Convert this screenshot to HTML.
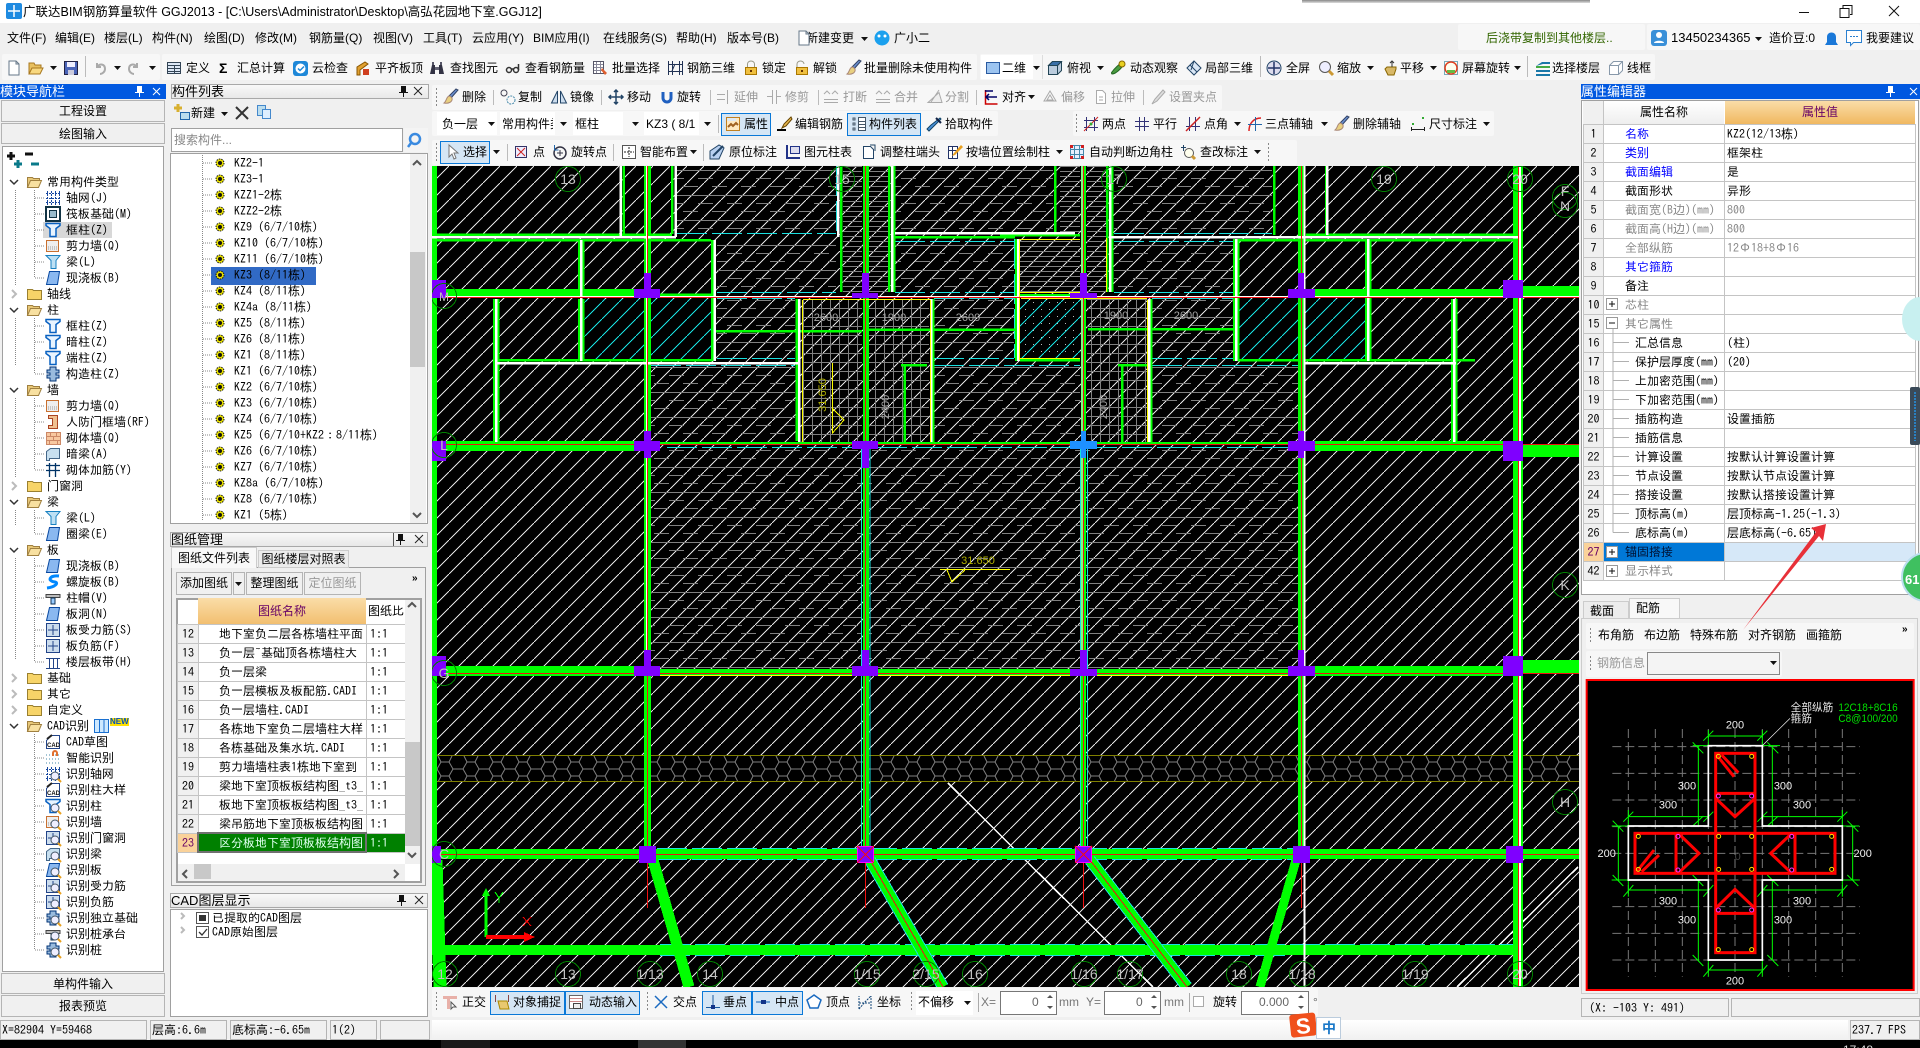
<!DOCTYPE html>
<html><head><meta charset="utf-8"><title>GGJ2013</title>
<style>
html,body{margin:0;width:1920px;height:1048px;overflow:hidden;background:#f0f0f0}
body{position:relative;font:12px/14px "Liberation Sans","WenQuanYi Zen Hei","Noto Sans CJK SC",sans-serif;color:#000}
a{position:absolute;white-space:pre}
div.b,svg.l{position:absolute}
.m1{top:31px}.t1{top:61px}.t2{top:90px}.t3{top:117px}.t4{top:145px}.t5{top:995px}
.g{color:#999}
.tb{background:#f7f7f7;border-radius:2px}
.on{background:#d5e6f5;border:1px solid #0a78d7;box-sizing:border-box}
.m{font-family:"IPAGothic","WenQuanYi Zen Hei","Noto Sans CJK SC",sans-serif}
.w{background:#fff}
.bd{border:1px solid #a0a0a0;box-sizing:border-box}
.btn{background:#f0f0f0;border:1px solid #b4b4b4;box-sizing:border-box;text-align:center;line-height:20px}
.hd{background:linear-gradient(#f8f8f8,#e8e8e8);border:1px solid #a8a8a8;box-sizing:border-box;font-size:13px;line-height:14px;white-space:nowrap;overflow:hidden}
.blue{background:#0058e0;color:#fff;font-size:13px;line-height:15px;white-space:nowrap}
.tree div{height:16px;line-height:16px;white-space:pre}
.tree .p{padding-left:47px}.tree .c{padding-left:66px}
table{position:absolute;border-collapse:collapse;table-layout:fixed;font-size:12px}
td{border:1px solid #c4c4c4;height:18px;padding:0;line-height:14px;white-space:nowrap;overflow:hidden}
td:first-child{background:#f0f0f0;text-align:center}
.bl{color:#00f}.gy{color:#888}
.pt td:nth-child(2){padding-left:21px}.pt td:nth-child(3){padding-left:2px}
.ch td:nth-child(2){padding-left:31px!important}
.dt td:nth-child(2){padding-left:20px}.dt td:nth-child(3){padding-left:3px;background:#fff}
</style></head>
<body>
<svg width="0" height="0" style="position:absolute"><defs>
<path id="dn" d="M0 0h7L3.500 4z" fill="#111"/>
<g id="new"><path d="M3 1h7l3 3v11H3z" fill="#fff" stroke="#678"/><path d="M10 1v3h3" fill="none" stroke="#678"/></g>
<g id="open"><path d="M1 14V3h5l1 2h6v3" fill="#e8c060" stroke="#a87820"/><path d="M1 14l3-6h11l-3 6z" fill="#f8d880" stroke="#a87820"/></g>
<g id="save"><path d="M1.500 1.500h13v13h-13z" fill="#4a64b8" stroke="#224"/><path d="M4 2h8v5H4z" fill="#eef"/><path d="M5 10h6v5H5z" fill="#ccd"/></g>
<path id="undo" d="M5 3v4h4M5 7c3-4 8-3 8 2 0 3-3 5-5 5" fill="none" stroke="#aaa" stroke-width="2"/>
<path id="redo" d="M11 3v4H7M11 7C8 3 3 4 3 9c0 3 3 5 5 5" fill="none" stroke="#aaa" stroke-width="2"/>
<g id="def"><path d="M1.500 2.500h13v11h-13z" fill="#dde8f6" stroke="#345"/><path d="M2 5.500h12M2 8.500h12M2 11.500h12M8.500 6v8" stroke="#345"/></g>
<g id="cloud"><rect x="1" y="1" width="15" height="15" rx="3" fill="#1e88d8"/><circle cx="8.500" cy="8.500" r="5" fill="#fff"/><path d="M6 8.500l2 2 4-4" stroke="#1e88d8" fill="none" stroke-width="1.500"/></g>
<g id="plate"><path d="M2 15V7l8-5 3 2-8 6v5z" fill="#e0a030" stroke="#850"/><path d="M8 9h6v6H8z" fill="#d04020"/></g>
<g id="find"><path d="M1 14l2-9h3v9zM10 14V5h3l2 9z" fill="#334"/><path d="M6 7h4v3H6z" fill="#667"/><path d="M3 2h2v3H3zM11 2h2v3h-2z" fill="#556"/></g>
<g id="gls" fill="none" stroke="#333" stroke-width="1.500"><circle cx="4" cy="10" r="2.500"/><circle cx="11" cy="10" r="2.500"/><path d="M6.500 9h2M13.500 10V4"/></g>
<g id="bsel"><path d="M1.500 1.500h10v12h-10z" fill="#fff" stroke="#556"/><path d="M2 4.500h9M2 7.500h9M2 10.500h9M4.500 2v11M8.500 2v11" stroke="#889"/><path d="M10 8l5 5-2 2-4-5z" fill="#e06030"/></g>
<path id="r3d" d="M1.500 1v14M5.500 1v14M12.500 1v14M15.500 1v14M1 4.500h15M1 11.500h15M8 4l-3 7" stroke="#235" fill="none"/>
<g id="lock"><path d="M4.500 7V4a3.500 3 0 0 1 7 0v3" fill="none" stroke="#998"/><rect x="2.500" y="7.500" width="11" height="7" fill="#f0c040" stroke="#a70"/><path d="M8 10v2" stroke="#630" stroke-width="2"/></g>
<g id="ulk"><path d="M3 7V4a3.500 3 0 0 1 7 0" fill="none" stroke="#998"/><rect x="2.500" y="7.500" width="11" height="7" fill="#f0c040" stroke="#a70"/><path d="M8 10v2" stroke="#630" stroke-width="2"/></g>
<g id="brush"><path d="M15 1L8 9 6 7l7-7z" fill="#6a8fd0" stroke="#346"/><path d="M7 7c-4 0-3 5-6 7 4 1 9-1 8-5z" fill="#e8d080" stroke="#a87"/></g>
<rect id="sq" x="1.500" y="2.500" width="13" height="11" fill="#9cc4f0" stroke="#2a5aa0"/>
<g id="cube"><path d="M1.500 5.500l4-4h9v9l-4 4h-9z" fill="#bcd" stroke="#245"/><path d="M1.500 5.500l4-4h9l-4 4z" fill="#3a70a8" stroke="#245"/><path d="M10.500 5.500v9M10.500 5.500l4-4" fill="none" stroke="#245"/></g>
<g id="orb"><path d="M13 2c3 3-7 12-11 12 0 0-1-1 0-2 2-3 7-8 11-10z" fill="#4a9a40" stroke="#262"/><circle cx="12" cy="4" r="3" fill="#e8d020" stroke="#860"/></g>
<g id="loc"><path d="M1 8l7-7 7 7-7 7z" fill="#dbe8f6" stroke="#246"/><path d="M4 5l7 7M8 1L5 10" stroke="#246"/></g>
<g id="full"><circle cx="8" cy="8" r="7" fill="#dde" stroke="#246"/><path d="M8 2v12M2 8h12" stroke="#236" stroke-width="1.500"/></g>
<g id="zm"><circle cx="7" cy="7" r="5.500" fill="#eef" stroke="#555"/><path d="M11 11l4 4" stroke="#c93" stroke-width="3"/></g>
<g id="hand"><path d="M3 9l3 6h6l2-6V7H5z" fill="#d8b868" stroke="#860"/><path d="M10 7V1M8 3l2-2 2 2" stroke="#333" fill="none"/></g>
<g id="rotz"><rect x="1.500" y="1.500" width="13" height="13" fill="#ffe" stroke="#7ab"/><circle cx="8" cy="8" r="6" fill="none" stroke="#e04020" stroke-width="1.500"/><path d="M4 10h8v3H4z" fill="#6b4"/></g>
<g id="flr"><path d="M1 6l6-4h8v2H8z" fill="#1a78a8"/><path d="M1 6h14v2H1z" fill="#4a4"/><path d="M1 10h14v2H1zM1 14h14v2H1z" fill="#1a78a8"/></g>
<path id="wire" d="M1.500 5.500l4-4h9v9l-4 4h-9zM1.500 5.500h9v9M10.500 5.500l4-4" fill="#fff" stroke="#89a"/>
<g id="copy" fill="none"><circle cx="4" cy="4" r="3" stroke="#445"/><circle cx="11" cy="11" r="4" stroke="#48a" stroke-dasharray="2 1"/></g>
<path id="mir" d="M6.500 2v12h-6zM9.500 2v12h6z" fill="#cde" stroke="#246"/>
<path id="mov" d="M8 1v14M1 8h14M6 3l2-2 2 2M6 13l2 2 2-2M3 6L1 8l2 2M13 6l2 2-2 2" fill="none" stroke="#246" stroke-width="1.500"/>
<path id="rot" d="M4 3v6a4 4 0 0 0 8 0V3" fill="none" stroke="#2060c0" stroke-width="3"/>
<path id="ext" d="M1 5.500h8M1 10.500h8M11.500 1v14" fill="none" stroke="#aaa"/>
<path id="trm" d="M6.500 1v14M10.500 1v14M1 7.500h5M11 7.500h4" stroke="#aaa"/>
<path id="brk" d="M1 5l3-3 3 3M9 5l3-3 3 3M1 10.500h14M1 13.500h14" stroke="#aaa" fill="none"/>
<path id="spl" d="M1 13.500h14l-3-10zM12 1L4 13" fill="#eee" stroke="#aaa"/>
<g id="alg"><path d="M2.500 1v14h12" stroke="#c00" fill="none" stroke-width="1.500"/><path d="M2 2h8M6 5L3 8l3 3M14 8H4" stroke="#006" fill="none" stroke-width="1.500"/></g>
<path id="off" d="M8 2l6 10H2zM8 6l3 5H5z" stroke="#aaa" fill="none"/>
<path id="str" d="M3.500 1.500h6l3 3v10h-9zM6 8h4M6 11h4" fill="#fff" stroke="#aaa"/>
<path id="ptd" d="M13 1L5 10l-3 5 5-3 8-9z" fill="#ddd" stroke="#aaa"/>
<g id="atr"><rect x="1.500" y="1.500" width="13" height="13" fill="#ffe8c0" stroke="#c08020"/><path d="M2 2h9v3H2z" fill="#e0e8f0"/><path d="M3 11l3-3 2 2 3-3 2 2" fill="none" stroke="#a06020" stroke-width="2"/></g>
<g id="edt"><path d="M1 14h9" stroke="#000" stroke-width="2"/><path d="M15 1L8 8l-2 4 4-2 6-7z" fill="#e8b850" stroke="#640"/></g>
<g id="lst"><path d="M2 2h2v2H2zM2 7h2v2H2zM2 12h2v2H2z" fill="none" stroke="#456"/><rect x="7.500" y="1.500" width="7" height="13" fill="#fff" stroke="#456"/><path d="M8 5.500h6M8 8.500h6M8 11.500h6" stroke="#456"/></g>
<g id="pck"><path d="M13 2l1 1-8 8-4 4-2-2 4-4z" fill="#4a90d8" stroke="#146"/><path d="M9 2l5 5" stroke="#124" stroke-width="2"/></g>
<g id="two"><path d="M3.500 1v14M11.500 1v14M1 4.500h14M1 11.500h14" stroke="#337" fill="none"/><path d="M1 15L15 1" stroke="#c22"/><circle cx="8" cy="8" r="1.500" fill="#3a3"/></g>
<path id="par" d="M1 5.500h14M1 10.500h14M5.500 1v14M10.500 1v14" stroke="#337"/>
<g id="ang"><path d="M4.500 1v14M10.500 1v14M1 10.500h14" stroke="#337"/><path d="M1 15L15 1" stroke="#c22" stroke-width="1.500"/></g>
<g id="arc"><path d="M2 15C2 7 7 2 14 2" stroke="#d22" fill="none" stroke-width="1.500"/><path d="M1 8.500h14M8.500 1v14" stroke="#26a"/></g>
<g id="dim"><path d="M1.500 15v-4M14.500 15v-4M1 13.500h14" stroke="#222"/><path d="M2 7h2v2H2zM12 1h2v2h-2z" fill="#3a3"/></g>
<path id="cur" d="M4 1v12l3-3 2 5 2-1-2-5h4z" fill="#fff" stroke="#777"/>
<g id="pnt"><rect x="1.500" y="2.500" width="11" height="11" fill="#eef" stroke="#336"/><path d="M3 4l8 8M11 4l-8 8" stroke="#c22"/></g>
<g id="rp" fill="none"><circle cx="8" cy="9" r="6" stroke="#334" stroke-width="1.500"/><path d="M8 6v6M5 9h6" stroke="#334"/><path d="M2.500 1v5h4" stroke="#26a"/></g>
<g id="sma"><rect x="1.500" y="1.500" width="13" height="13" fill="#fff" stroke="#555"/><path d="M8 3v10M3 8h10" stroke="#222" stroke-dasharray="2 1"/></g>
<g id="org"><path d="M1 15V7l9-6 5 3-5 11z" fill="#b8d0f0" stroke="#246"/><path d="M4 12L14 2" stroke="#246" stroke-width="2"/></g>
<g id="tbl"><path d="M2 1v13h13" fill="none" stroke="#238" stroke-width="2"/><rect x="5.500" y="2.500" width="9" height="7" fill="#dde" stroke="#238"/></g>
<g id="adj"><path d="M3.500 2.500h7l3 3v9h-10z" fill="#fff" stroke="#246"/><path d="M10 1h5v6" fill="none" stroke="#246"/></g>
<g id="wl2"><rect x="1.500" y="2.500" width="9" height="12" fill="#fff" stroke="#236"/><path d="M2 6.500h8M5.500 3v11" stroke="#236"/><path d="M14 1L7 9l-2 3 3-1 8-8z" fill="#e8a020"/></g>
<g id="aut"><rect x="1.500" y="1.500" width="13" height="13" fill="#e8f0ff" stroke="#48a"/><path d="M5.500 2v12M10.500 2v12M2 5.500h12M2 10.500h12" stroke="#48a"/><path d="M1 1h3v3H1zM12 1h3v3h-3zM1 12h3v3H1zM12 12h3v3h-3z" fill="#d02020"/></g>
<g id="chk"><path d="M3.500 1v6M1 3.500h5" stroke="#246"/><circle cx="9" cy="9" r="4.500" fill="#ffe" stroke="#555"/><path d="M12 12l3 3" stroke="#c93" stroke-width="3"/></g>
<g id="ort"><path d="M1 2h14v3H8v10H5V5H1z" fill="#e8b0a8"/><path d="M9 8v7l2-2h3z" fill="#fff" stroke="#555"/></g>
<g id="snp"><path d="M1.500 1v7M14.500 1v7" stroke="#844"/><path d="M4 7h9l2 8H6z" fill="#e8c870" stroke="#a80"/></g>
<g id="dyn"><rect x="1.500" y="1.500" width="13" height="13" fill="#fff" stroke="#666"/><path d="M2 4.500h12M2 7.500h12" stroke="#c88"/><rect x="5.500" y="9.500" width="7" height="5" fill="#eee" stroke="#444"/></g>
<path id="crs" d="M2 2l12 12M14 2L2 14" stroke="#1a6ac0" stroke-width="1.500"/>
<g id="prp"><path d="M1 13.500h14M8 1v12" stroke="#1a5aa0"/><rect x="6" y="11" width="4" height="4" fill="#138"/></g>
<g id="mdp"><path d="M1 8h14" stroke="#4a88c8" stroke-width="1.500"/><rect x="6" y="6" width="5" height="4" fill="#138"/></g>
<path id="apx" d="M8 1l7 5-3 8H4L1 6z" fill="#fff" stroke="#1a6ac0" stroke-width="1.500"/>
<path id="crd" d="M2 15l6-7 6-6M2 15V2M14 15V2M2 9h12" stroke="#147" stroke-dasharray="2 1" fill="none"/>
<path id="fc" d="M1.500 13.500v-10h5l1 1h8v9z" fill="#f7d468" stroke="#9a8030"/>
<g id="fo"><path d="M1.500 13.500v-10h5l1 1h6v2" fill="#e8c878" stroke="#a08040"/><path d="M1.500 13.500l3-7h11l-3 7z" fill="#f8e0a0" stroke="#a08040"/></g>
<path id="col" d="M1 1.500h14v2l-4 3v8H5v-8l-4-3z" fill="#e8f4ff" stroke="#0860c0" stroke-width="1.500"/>
<g id="wal"><rect x="1.500" y="2.500" width="12" height="11" fill="#eee" stroke="#c87030"/><path d="M3 11h9M3 9h9" stroke="#999" stroke-dasharray="1 1"/></g>
<path id="bem" d="M1 1.500h14l-4 5v8H6v-8z" fill="#bde0f4" stroke="#1880c0"/>
<path id="slb" d="M4.500 1.500h10l-2 13H1.500z" fill="#8ab8f0" stroke="#0848a0"/>
<path id="axi" d="M2.500 1v14M6.500 1v14M10.500 1v14M14.500 1v14M1 3.500h15M1 8.500h15M1 12.500h15" stroke="#1848a0" stroke-dasharray="2 1"/>
<g id="raf"><rect x="1" y="1" width="14" height="14" fill="none" stroke="#134" stroke-width="2"/><rect x="4.500" y="4.500" width="7" height="7" fill="#9bc" stroke="#134"/></g>
<path id="gzz" d="M5 1h6v3h3v3h-3v2h3v3h-3v3H5v-3H2V9h3V7H2V4h3z" fill="#9bd" stroke="#037"/>
<path id="dor" d="M3.500 1.500h9v13h-9v-3h4v-7h-4z" fill="#f0c090" stroke="#a42"/>
<g id="mas"><rect x="1.500" y="2.500" width="14" height="12" fill="#f8c8a0" stroke="#c86"/><path d="M2 6.500h13M2 10.500h13M5.500 3v3M11.500 3v3M8.500 7v3M4.500 11v3M12.500 11v3" stroke="#c86"/></g>
<path id="hid" d="M1.500 5.500l4-3h9v10h-10v2h-3z" fill="#c8e0f0" stroke="#468"/>
<path id="mrf" d="M1 3.500h14M4.500 1v14M10.500 1v14M1 8.500h14" stroke="#036" stroke-width="1.300"/>
<path id="spi" d="M14 2C4 1 2 7 10 8c4 1 0 5-8 6" fill="none" stroke="#08f" stroke-width="3"/>
<g id="cap"><path d="M1 4.500h14v3H1z" fill="#bbb" stroke="#444"/><path d="M6 8h4v6H6z" fill="#9cf" stroke="#135"/></g>
<g id="rb"><rect x="1.500" y="1.500" width="13" height="13" fill="#cde" stroke="#248"/><path d="M8 3v10M3 8h10" stroke="#248"/></g>
<path id="bnd" d="M1 4.500h14M1 14.500h14M4.500 5v9M8.500 5v9M12.500 5v9" stroke="#248"/>
<g id="cad"><path d="M1.500 6.500l5-5h8v13h-13z" fill="#fff" stroke="#248"/><path d="M2 5L7 1" stroke="#222" stroke-width="2"/><text x="2" y="13" font-size="6" font-weight="bold" fill="#111" font-family="Liberation Sans">CAD</text></g>
<g id="ai"><path d="M1 5h14M1 9h14M1 13h14" stroke="#48a" stroke-dasharray="1 2"/><path d="M7 6V3a3 3 0 0 1 6 0v3h-2V3a1 1 0 0 0-2 0v3z" fill="#e07030"/></g>
<g id="mg"><circle cx="10" cy="10" r="4" fill="#eef" stroke="#456"/><path d="M13 13l3 3" stroke="#e8a020" stroke-width="2"/></g>
<path id="pin" d="M3 1h5v6h2v1H6v4H5V8H1V7h2z" fill="#111"/>
<path id="xx" d="M0 0l8 8M8 0L0 8" stroke="#222" fill="none"/>
<g id="gz"><circle cx="6" cy="6" r="4" fill="#e8e000" stroke="#111" stroke-dasharray="1.500 1"/><circle cx="6" cy="6" r="2" fill="#111"/></g>
</defs></svg>

<div class="b w" style="left:0;top:0;width:1920px;height:23px"></div>
<div class="b" style="left:1302px;top:0;width:288px;height:3px;background:linear-gradient(#888,#ddd)"></div>
<svg class="l" style="left:6px;top:3px" width="16" height="16"><rect width="16" height="16" rx="2" fill="#1e8ae0"/><path d="M8 2v12M2 8h12" stroke="#fff" stroke-width="1.500" fill="none"/></svg>
<a style="left:23px;top:5px;font-size:12.500px;color:#000">广联达BIM钢筋算量软件 GGJ2013 - [C:\Users\Administrator\Desktop\高弘花园地下室.GGJ12]</a>
<svg class="l" style="left:1790px;top:0" width="130" height="23"><path d="M9 12.500h10M50 8.500h9v9h-9zM53 8V5.500h9v9h-2M99 6l10 10M109 6L99 16" stroke="#111" fill="none"/></svg>

<a class="m1" style="left:7px">文件(F)</a><a class="m1" style="left:55px">编辑(E)</a><a class="m1" style="left:104px">楼层(L)</a><a class="m1" style="left:152px">构件(N)</a><a class="m1" style="left:204px">绘图(D)</a><a class="m1" style="left:255px">修改(M)</a><a class="m1" style="left:309px">钢筋量(Q)</a><a class="m1" style="left:373px">视图(V)</a><a class="m1" style="left:423px">工具(T)</a><a class="m1" style="left:472px">云应用(Y)</a><a class="m1" style="left:533px">BIM应用(I)</a><a class="m1" style="left:603px">在线服务(S)</a><a class="m1" style="left:676px">帮助(H)</a><a class="m1" style="left:727px">版本号(B)</a><a class="m1" style="left:806px">新建变更</a><a class="m1" style="left:894px">广小二</a>
<div class="b tb" style="left:1458px;top:24px;width:187px;height:26px"></div><div class="b tb" style="left:1647px;top:24px;width:273px;height:26px"></div>
<a class="m1" style="left:1486px;color:#336600">后浇带复制到其他楼层..</a><a class="m1" style="left:1671px;font-size:13px">13450234365</a><a class="m1" style="left:1769px">造价豆:0</a><a class="m1" style="left:1866px">我要建议</a>

<div class="b tb" style="left:2px;top:54px;width:158px;height:26px"></div><div class="b tb" style="left:162px;top:54px;width:815px;height:26px"></div><div class="b tb" style="left:980px;top:54px;width:675px;height:26px"></div><div class="b w" style="left:981px;top:55px;width:52px;height:24px"></div><div class="b w" style="left:1042px;top:55px;width:1px;height:24px;background:#ddd"></div>
<a class="t1" style="left:186px">定义</a><a class="t1" style="left:219px;font-weight:bold;font-size:14px">Σ</a><a class="t1" style="left:237px">汇总计算</a><a class="t1" style="left:312px">云检查</a><a class="t1" style="left:375px">平齐板顶</a><a class="t1" style="left:450px">查找图元</a><a class="t1" style="left:525px">查看钢筋量</a><a class="t1" style="left:612px">批量选择</a><a class="t1" style="left:687px">钢筋三维</a><a class="t1" style="left:762px">锁定</a><a class="t1" style="left:813px">解锁</a><a class="t1" style="left:864px">批量删除未使用构件</a><a class="t1" style="left:1002px">二维</a><a class="t1" style="left:1067px">俯视</a><a class="t1" style="left:1130px">动态观察</a><a class="t1" style="left:1205px">局部三维</a><a class="t1" style="left:1286px">全屏</a><a class="t1" style="left:1337px">缩放</a><a class="t1" style="left:1400px">平移</a><a class="t1" style="left:1462px">屏幕旋转</a><a class="t1" style="left:1552px">选择楼层</a><a class="t1" style="left:1627px">线框</a>

<div class="b tb" style="left:432px;top:85px;width:790px;height:25px"></div>
<a class="t2" style="left:462px">删除</a><a class="t2" style="left:518px">复制</a><a class="t2" style="left:570px">镜像</a><a class="t2" style="left:627px">移动</a><a class="t2" style="left:677px">旋转</a><a class="t2 g" style="left:734px">延伸</a><a class="t2 g" style="left:785px">修剪</a><a class="t2 g" style="left:843px">打断</a><a class="t2 g" style="left:894px">合并</a><a class="t2 g" style="left:945px">分割</a><a class="t2" style="left:1002px">对齐</a><a class="t2 g" style="left:1061px">偏移</a><a class="t2 g" style="left:1111px">拉伸</a><a class="t2 g" style="left:1169px">设置夹点</a>

<div class="b tb" style="left:432px;top:111px;width:566px;height:25px"></div><div class="b tb" style="left:1073px;top:111px;width:421px;height:25px"></div>
<div class="b w" style="left:437px;top:112px;width:60px;height:23px"></div><div class="b w" style="left:500px;top:112px;width:55px;height:23px"></div><div class="b w" style="left:573px;top:112px;width:50px;height:23px"></div><div class="b w" style="left:644px;top:112px;width:55px;height:23px"></div>
<div class="b on" style="left:721px;top:113px;width:50px;height:23px"></div><div class="b on" style="left:847px;top:113px;width:74px;height:23px"></div>
<a class="t3" style="left:442px">负一层</a><a class="t3" style="left:502px;width:51px;overflow:hidden">常用构件类</a><a class="t3" style="left:575px">框柱</a><a class="t3" style="left:646px">KZ3 ( 8/1</a><a class="t3" style="left:744px">属性</a><a class="t3" style="left:795px">编辑钢筋</a><a class="t3" style="left:869px">构件列表</a><a class="t3" style="left:945px">拾取构件</a><a class="t3" style="left:1102px">两点</a><a class="t3" style="left:1153px">平行</a><a class="t3" style="left:1204px">点角</a><a class="t3" style="left:1265px">三点辅轴</a><a class="t3" style="left:1353px">删除辅轴</a><a class="t3" style="left:1429px">尺寸标注</a>

<div class="b tb" style="left:432px;top:140px;width:865px;height:25px"></div>
<div class="b on" style="left:440px;top:141px;width:50px;height:23px"></div>
<a class="t4" style="left:463px">选择</a><a class="t4" style="left:533px">点</a><a class="t4" style="left:571px">旋转点</a><a class="t4" style="left:640px">智能布置</a><a class="t4" style="left:729px">原位标注</a><a class="t4" style="left:804px">图元柱表</a><a class="t4" style="left:880px">调整柱端头</a><a class="t4" style="left:966px">按墙位置绘制柱</a><a class="t4" style="left:1089px">自动判断边角柱</a><a class="t4" style="left:1200px">查改标注</a>

<!-- CANVAS -->
<svg class="l" style="left:432px;top:166px" width="1147" height="821" viewBox="432 166 1147 821" font-family="Liberation Sans" shape-rendering="crispEdges">
<defs>
<pattern id="h" x="432" y="166" width="17" height="17" patternUnits="userSpaceOnUse"><path d="M0 17L17 0" stroke="#e0e0e0" stroke-width="1"/></pattern>
<pattern id="cy" x="432" y="166" width="17" height="17" patternUnits="userSpaceOnUse"><path d="M0 17L17 0" stroke="#19e0e0"/></pattern>
<pattern id="sl" x="0" y="17" width="29" height="25" patternUnits="userSpaceOnUse"><path d="M0 .5H29" stroke="#808080"/><path d="M2 8.500H17M16 16.500H29M0 16.500H2" stroke="#808080"/></pattern>
<pattern id="sl2" x="0" y="170" width="29" height="25" patternUnits="userSpaceOnUse"><path d="M0 .5H29" stroke="#808080"/><path d="M2 8.500H17M16 16.500H29M0 16.500H2" stroke="#808080"/></pattern>
<pattern id="st" x="0" y="166" width="4" height="5" patternUnits="userSpaceOnUse"><path d="M0 .5H4" stroke="#808080"/></pattern>
<pattern id="gr" x="803" y="299" width="9" height="9" patternUnits="userSpaceOnUse"><path d="M.5 0V9M0 .5H9" stroke="#808080"/></pattern>
<pattern id="dt" width="8" height="7" patternUnits="userSpaceOnUse"><path d="M1 1h1v1H1z" fill="#bbb"/></pattern>
<pattern id="hx" x="432" y="756" width="26" height="26" patternUnits="userSpaceOnUse"><path d="M0 13h5l4-7h8l4 7h5M5 13l4 7h8l4-7M9 6L6 0M17 6l3-6M9 20l-3 6M17 20l3 6" fill="none" stroke="#808080" shape-rendering="auto"/></pattern>
</defs>
<rect x="432" y="166" width="1147" height="821" fill="#000"/>
<rect x="432" y="166" width="1147" height="821" fill="url(#h)"/>
<path fill="url(#sl2)" d="M677 166h159v67H677zM717 241h119v51H717zM895 166h158v66H895zM895 241h119v51H895zM1114 166h158v67h-158zM1114 241h119v51h-119z"/>
<path fill="url(#sl)" d="M717 299h78v59h-78zM651 365h144v77H651zM651 448h211v220H651zM869 448h429v220H869zM934 299h80v59h-80zM934 365h146v77H934zM1152 299h81v59h-81zM1152 365h146v77h-146z"/>
<path fill="url(#st)" d="M843 166h19v126h-19zM869 166h20v126h-20zM1060 166h20v66h-20zM1087 166h19v126h-19zM1020 240h60v52h-60z"/>
<path fill="url(#gr)" d="M803 299h59v143h-59zM869 299h60v143h-60zM1087 299h60v143h-60z"/>
<path fill="#000" d="M583 299h61v60h-61zM651 299h60v60h-60zM1020 300h60v58h-60zM1238 299h60v60h-60zM1306 299h59v60h-59zM432 756h1147v26H432z"/>
<path fill="url(#cy)" d="M583 299h61v60h-61zM651 299h60v60h-60zM1020 300h60v58h-60zM1238 299h60v60h-60zM1306 299h59v60h-59z"/>
<rect x="1020" y="300" width="60" height="58" fill="url(#dt)"/>
<rect x="432" y="756" width="1147" height="26" fill="url(#hx)"/>
<path d="M432 755.500H1579M432 781.500H1579" stroke="#808000"/>
<path d="M948 783L1153 987M1578 867L1457 987" stroke="#fff" stroke-width="1.500"/>
<g fill="none" stroke="#19e0e0" stroke-dasharray="30 5">
<path d="M836.500 166V236M677 233.500H836M717 292.500H836M717 298.500H795M717 358.500H795M895 233.500H1053M895 241.500H1014M895 292.500H1014M934 298.500H1014M934 358.500H1014M934 365.500H1080M651 365.500H795M1114 233.500H1272M1114 241.500H1233M1114 292.500H1233M1152 298.500H1233M1152 358.500H1233M1152 365.500H1298M1014.500 239V358M667 447.500H1288M657 848.500H1293M657 859.500H1293M660 944.500H1513M660 955.500H1290"/>
<path d="M861.500 448V846M870 448V846M1080.500 448V846M1087.500 448V846" stroke-dasharray="none"/></g>
<g fill="#00ff00">
<path d="M432 166h5v684h-5zM644 166h7v680h-7zM863 166h6v680h-6zM1081 166h5v680h-5zM1298 166h6v680h-6zM1513 166h10v821h-10z"/>
<path d="M446 289h188v7H446zM1315 289h188v7h-188zM1523 286h56v10h-56zM446 441h188v10H446zM1315 441h188v10h-188zM1523 445h56v12h-56zM660 442h628v2H660zM446 666h188v10H446zM1315 666h188v10h-188zM1523 660h56v13h-56zM660 669h628v7H660zM432 849h1147v10H432zM432 945h1081v10H432z"/>
</g>
<g stroke="#00ff00" stroke-width="2.500" fill="none">
<path d="M436 234.500H672M436 240H711M1306 234.500H1515M1238 240H1514M495 360H712M1238 360H1475M660 294.500H712M623.500 166V235M672 166V234M579 240V296M583 240V296M579 299V361M583 299V361M712 240V361M494 299V442M498 299V442M796.500 299V441M841 166V292M889 166V292M894 166V292M933 299V442M1016 239V361M1107 166V292M1112 166V292M1151 299V442M1274 166V235M1326 166V235M1234 239V361M1238 239V361M1366 239V361M1370 239V361M1452 299V442M1456 299V442M1055 166V232M1000 235H1080M1020 295H1080M1020 360H1080M895 237H1015M716 331H862M869 329.500H1015M1088 329H1233M901 365H927M904.500 365V442M1118 365H1147M1122 365V442"/>
</g>
<g stroke="#19e0e0" fill="none"><path d="M870 860L943 987M1090 860L1187 987" stroke-width="12"/></g>
<g stroke="#00ff00" fill="none"><path d="M653 860L689 987" stroke-width="11"/><path d="M870 860L943 987M1090 860L1187 987" stroke-width="10"/><path d="M1296 860L1260 987" stroke-width="9"/><path d="M436 860L440 987" stroke-width="13"/></g>
<g stroke="#fff" fill="none" stroke-width="2.500"><path d="M431 237H676M895 233H1075M1111 237H1518M495 363H800M1304 363H1456M620.500 166V236M675.500 166V237M581 240V361M714.500 240V361M496 299V442M799 299V442M838 166V237M892 166V292M931 299V442M1018 239V361M1110 166V292M1149 299V442M1236 239V361M1368 239V361M1454 299V442M1327 166V235"/><path d="M1304.500 166V987M1520 166V987M432 297H1579" stroke-width="2"/><path d="M646.500 166V673M1082 166V673" stroke-width="1"/></g>
<path d="M802.500 300V442M930.500 300V442M803 299.500H930M1019.500 239V360M1020 239.500H1080M1147.500 300V442M660 675.500H1288M1020 358.500H1080M1021 298.500H1147M1106.500 238V292M1020 292.500H1080" stroke="#ffff00" fill="none"/>
<path d="M432 297.500H1579M432 444.500H1579M432 673.500H1579M432 854.500H1579M647.500 166V908M865.500 166V908M1083.500 166V908M1301.500 166V908M1518.500 166V987M870 860L943 987M1090 860L1187 987" stroke="#f01010" fill="none"/>
<g fill="#7f00ff">
<path d="M431 280h15v18h-15zM644 273h7v25h-7zM634 289h26v9h-26zM862 273h7v25h-7zM852 293h26v5h-26zM1080 273h7v25h-7zM1070 293h27v5h-27zM1298 273h6v25h-6zM1288 289h27v9h-27zM1503 280h20v18h-20z"/>
<path d="M431 441h15v20h-15zM644 431h7v27h-7zM634 441h26v10h-26zM862 441h7v27h-7zM852 441h26v8h-26zM1298 431h6v27h-6zM1288 441h27v10h-27zM1503 441h20v20h-20z"/>
<path d="M431 656h15v20h-15zM644 650h7v26h-7zM634 666h26v10h-26zM862 650h7v26h-7zM852 666h26v10h-26zM1080 650h7v26h-7zM1070 669h27v7h-27zM1298 650h6v26h-6zM1288 666h27v10h-27zM1503 656h20v20h-20z"/>
<path d="M431 846h10v17h-10zM639 846h17v17h-17zM1293 846h17v17h-17zM1506 846h17v17h-17z"/>
<path d="M857.500 846.500h16v16h-16zM1075.500 846.500h16v16h-16z" stroke="#ff00ff"/>
</g>
<path d="M1081 431h5v27h-5zM1070 441h27v8h-27z" fill="#1e90ff"/>
<path d="M857 846l17 17M874 846l-17 17M1075 846l17 17M1092 846l-17 17" stroke="#f01010"/>
<g fill="none" stroke="#008000">
<circle cx="568" cy="179" r="12.500"/><circle cx="842" cy="179" r="12.500"/><circle cx="1114" cy="179" r="12.500"/><circle cx="1384" cy="179" r="12.500"/><circle cx="1520" cy="179" r="12.500"/><circle cx="1565" cy="197" r="12.500"/><circle cx="1565" cy="205" r="12.500"/><circle cx="444" cy="296" r="12.500"/><circle cx="444" cy="445" r="12.500"/><circle cx="444" cy="673" r="12.500"/><circle cx="444" cy="854" r="12.500"/><circle cx="1565" cy="585" r="12.500"/><circle cx="1565" cy="802" r="12.500"/>
<circle cx="445" cy="974" r="12.500"/><circle cx="568" cy="974" r="12.500"/><circle cx="650" cy="974" r="12.500"/><circle cx="710" cy="974" r="12.500"/><circle cx="867" cy="974" r="12.500"/><circle cx="926" cy="974" r="12.500"/><circle cx="975" cy="974" r="12.500"/><circle cx="1084" cy="974" r="12.500"/><circle cx="1130" cy="974" r="12.500"/><circle cx="1239" cy="974" r="12.500"/><circle cx="1302" cy="974" r="12.500"/><circle cx="1415" cy="974" r="12.500"/><circle cx="1520" cy="974" r="12.500"/>
</g>
<g fill="#c0c0c0" font-size="14" text-anchor="middle">
<text x="568" y="184">13</text><text x="842" y="184">15</text><text x="1114" y="184">17</text><text x="1384" y="184">19</text><text x="1520" y="184">20</text><text x="1565" y="196">F</text><text x="1565" y="211">N</text><text x="444" y="301" font-size="12">M</text><text x="444" y="450">L</text><text x="444" y="678">G</text><text x="444" y="859">C</text><text x="1565" y="590">K</text><text x="1565" y="807">H</text>
<text x="445" y="979">12</text><text x="568" y="979">13</text><text x="650" y="979">1/13</text><text x="710" y="979">14</text><text x="867" y="979">1/15</text><text x="926" y="979">2/15</text><text x="975" y="979">16</text><text x="1084" y="979">1/16</text><text x="1130" y="979">1/17</text><text x="1239" y="979">18</text><text x="1302" y="979">1/18</text><text x="1415" y="979">1/19</text><text x="1520" y="979">20</text>
</g>
<g fill="#a8a8a8" font-size="11" text-anchor="middle"><text x="826" y="321">2600</text><text x="894" y="321">1900</text><text x="968" y="321">2600</text><text x="1116" y="319">1900</text><text x="1186" y="319">2600</text><text transform="translate(889,407) rotate(-90)">2400</text><text transform="translate(1107,407) rotate(-90)">2400</text></g>
<text x="978" y="564" fill="#b0b000" font-size="11" text-anchor="middle">31.650</text>
<text transform="translate(826,395) rotate(-90)" fill="#b0b000" font-size="11" text-anchor="middle">31.650</text>
<path d="M940 569.500H1010M947 570L952 582L965 570M832.500 363V433L844 420L832 408" stroke="#ffff00" fill="none"/>
<path d="M486 937V892" stroke="#00ff00" stroke-width="3"/><path d="M482 896l4-8 4 8z" fill="#00ff00"/>
<path d="M486 937H526" stroke="#ff0000" stroke-width="4"/><path d="M524 932l11 5-11 5z" fill="#ff0000"/>
<path d="M495 892l4 6 4-6M499 898v5" stroke="#00ff00" fill="none"/><path d="M523 917l8 9M531 917l-8 9" stroke="#ff0000"/>
</svg>

<!-- LEFT PANEL -->
<div class="b blue" style="left:0;top:84px;width:166px;height:15px">模块导航栏</div>
<svg class="l" style="left:134px;top:85px" width="30" height="14"><path d="M3 1h5v6h2v1H6v4H5V8H1V7h2z" fill="#fff"/><path d="M19 3l7 7M26 3l-7 7" stroke="#fff"/></svg>
<div class="b btn" style="left:1px;top:100px;width:164px;height:22px">工程设置</div>
<div class="b btn" style="left:1px;top:123px;width:164px;height:21px">绘图输入</div>
<div class="b w bd" style="left:2px;top:146px;width:162px;height:826px"></div>
<div class="b" style="left:43px;top:222px;width:69px;height:16px;background:#d8d8d8"></div>
<div class="b m tree" style="left:0;top:174px;width:164px">
<div class="p">常用构件类型</div><div class="c">轴网(J)</div><div class="c">筏板基础(M)</div><div class="c">框柱(Z)</div><div class="c">剪力墙(Q)</div><div class="c">梁(L)</div><div class="c">现浇板(B)</div><div class="p">轴线</div><div class="p">柱</div><div class="c">框柱(Z)</div><div class="c">暗柱(Z)</div><div class="c">端柱(Z)</div><div class="c">构造柱(Z)</div><div class="p">墙</div><div class="c">剪力墙(Q)</div><div class="c">人防门框墙(RF)</div><div class="c">砌体墙(Q)</div><div class="c">暗梁(A)</div><div class="c">砌体加筋(Y)</div><div class="p">门窗洞</div><div class="p">梁</div><div class="c">梁(L)</div><div class="c">圈梁(E)</div><div class="p">板</div><div class="c">现浇板(B)</div><div class="c">螺旋板(B)</div><div class="c">柱帽(V)</div><div class="c">板洞(N)</div><div class="c">板受力筋(S)</div><div class="c">板负筋(F)</div><div class="c">楼层板带(H)</div><div class="p">基础</div><div class="p">其它</div><div class="p">自定义</div><div class="p">CAD识别</div><div class="c">CAD草图</div><div class="c">智能识别</div><div class="c">识别轴网</div><div class="c">识别柱大样</div><div class="c">识别柱</div><div class="c">识别墙</div><div class="c">识别门窗洞</div><div class="c">识别梁</div><div class="c">识别板</div><div class="c">识别受力筋</div><div class="c">识别负筋</div><div class="c">识别独立基础</div><div class="c">识别桩承台</div><div class="c">识别桩</div>
</div>
<a style="left:110px;top:718px;font:bold 8px 'Liberation Sans';background:#ffe000;color:#0050c0;line-height:8px">NEW</a>
<div class="b btn" style="left:1px;top:973px;width:164px;height:21px">单构件输入</div>
<div class="b btn" style="left:1px;top:995px;width:164px;height:22px">报表预览</div>

<!-- COMPONENT LIST -->
<div class="b hd" style="left:171px;top:84px;width:258px;height:15px">构件列表</div>
<a style="left:191px;top:106px">新建</a>
<div class="b w bd" style="left:171px;top:128px;width:232px;height:24px"></div>
<a style="left:174px;top:133px;color:#888">搜索构件...</a>
<div class="b" style="left:404px;top:128px;width:24px;height:24px;background:#f4f4f4"></div>
<div class="b w bd" style="left:170px;top:153px;width:258px;height:371px"></div>
<div class="b" style="left:211px;top:267px;width:105px;height:18px;background:#316ac5"></div>
<div class="b m tree" style="left:234px;top:155px">
<div>KZ2-1</div><div>KZ3-1</div><div>KZZ1-2栋</div><div>KZZ2-2栋</div><div>KZ9（6/7/10栋）</div><div>KZ10（6/7/10栋）</div><div>KZ11（6/7/10栋）</div><div>KZ3（8/11栋）</div><div>KZ4（8/11栋）</div><div>KZ4a（8/11栋）</div><div>KZ5（8/11栋）</div><div>KZ6（8/11栋）</div><div>KZ1（8/11栋）</div><div>KZ1（6/7/10栋）</div><div>KZ2（6/7/10栋）</div><div>KZ3（6/7/10栋）</div><div>KZ4（6/7/10栋）</div><div>KZ5（6/7/10+KZ2：8/11栋）</div><div>KZ6（6/7/10栋）</div><div>KZ7（6/7/10栋）</div><div>KZ8a（6/7/10栋）</div><div>KZ8（6/7/10栋）</div><div>KZ1（5栋）</div>
</div>
<div class="b" style="left:410px;top:154px;width:16px;height:369px;background:#f0f0f0"></div>
<div class="b" style="left:410px;top:252px;width:15px;height:115px;background:#c8c8c8"></div>

<!-- DRAWINGS -->
<div class="b hd" style="left:170px;top:532px;width:258px;height:15px">图纸管理</div>
<div class="b w bd" style="left:171px;top:567px;width:255px;height:319px;background:#f0f0f0"></div>
<div class="b" style="left:171px;top:547px;width:86px;height:21px;background:#f8f8f8;border:1px solid #ccc;border-bottom:0;box-sizing:border-box;text-align:center;line-height:20px">图纸文件列表</div>
<div class="b" style="left:258px;top:550px;width:91px;height:18px;background:#ececec;border:1px solid #ccc;box-sizing:border-box;text-align:center;line-height:17px">图纸楼层对照表</div>
<div class="b btn" style="left:176px;top:572px;width:56px;height:23px">添加图纸</div><div class="b btn" style="left:233px;top:572px;width:12px;height:23px"></div><div class="b btn" style="left:246px;top:572px;width:57px;height:23px">整理图纸</div><div class="b btn" style="left:304px;top:572px;width:57px;height:23px;color:#999">定位图纸</div>
<a style="left:412px;top:572px;font-weight:bold;font-size:10px">»</a>
<div class="b w" style="left:176px;top:598px;width:246px;height:285px;border:2px solid #a0a0a0;box-sizing:border-box"></div>
<div class="b" style="left:198px;top:598px;width:168px;height:26px;background:linear-gradient(#fadda8,#f2bf70);color:#660066;text-align:center;line-height:26px">图纸名称</div>
<div class="b m" style="left:368px;top:598px;width:36px;height:26px;line-height:26px;overflow:hidden;white-space:nowrap">图纸比</div>
<table class="dt m" style="left:177px;top:624px;width:228px"><col style="width:21px"><col style="width:168px"><col style="width:39px">
<tr><td>12</td><td>地下室负二层各栋墙柱平面</td><td>1:1</td></tr>
<tr><td>13</td><td>负一层~基础顶各栋墙柱大</td><td>1:1</td></tr>
<tr><td>14</td><td>负一层梁</td><td>1:1</td></tr>
<tr><td>15</td><td>负一层模板及板配筋.CADI</td><td>1:1</td></tr>
<tr><td>16</td><td>负一层墙柱.CADI</td><td>1:1</td></tr>
<tr><td>17</td><td>各栋地下室负二层墙柱大样</td><td>1:1</td></tr>
<tr><td>18</td><td>各栋基础及集水坑.CADI</td><td>1:1</td></tr>
<tr><td>19</td><td>剪力墙墙柱表1栋地下室到</td><td>1:1</td></tr>
<tr><td>20</td><td>梁地下室顶板板结构图_t3_</td><td>1:1</td></tr>
<tr><td>21</td><td>板地下室顶板板结构图_t3_</td><td>1:1</td></tr>
<tr><td>22</td><td>梁吊筋地下室顶板板结构图</td><td>1:1</td></tr>
<tr><td style="background:#fad29a;color:#660066">23</td><td style="background:#008000;color:#dfe">区分板地下室顶板板结构图</td><td style="background:#008000;color:#dfe">1:1</td></tr>
</table>
<div class="b" style="left:197px;top:832px;width:170px;height:21px;border:2px solid #707070;box-sizing:border-box"></div>
<div class="b" style="left:405px;top:600px;width:15px;height:264px;background:#f0f0f0"></div>
<div class="b" style="left:405px;top:742px;width:15px;height:104px;background:#c8c8c8"></div>
<div class="b" style="left:178px;top:864px;width:227px;height:17px;background:#f0f0f0"></div>
<div class="b" style="left:194px;top:864px;width:17px;height:15px;background:#c8c8c8"></div>

<!-- CAD LAYERS -->
<div class="b hd" style="left:170px;top:893px;width:258px;height:15px">CAD图层显示</div>
<div class="b w bd" style="left:170px;top:909px;width:258px;height:108px"></div>
<a class="m" style="left:212px;top:911px;font-size:12px">已提取的CAD图层</a><a class="m" style="left:212px;top:925px">CAD原始图层</a>

<!-- BOTTOM TOOLBAR -->
<div class="b tb" style="left:432px;top:988px;width:886px;height:29px"></div>
<div class="b on" style="left:490px;top:991px;width:75px;height:24px"></div><div class="b on" style="left:565px;top:991px;width:75px;height:24px"></div><div class="b on" style="left:702px;top:991px;width:50px;height:24px"></div><div class="b on" style="left:752px;top:991px;width:51px;height:24px"></div>
<div class="b w" style="left:916px;top:991px;width:57px;height:24px"></div>
<div class="b w" style="left:1000px;top:991px;width:57px;height:24px;border:1px solid #777;box-sizing:border-box"></div><div class="b w" style="left:1104px;top:991px;width:57px;height:24px;border:1px solid #777;box-sizing:border-box"></div><div class="b w" style="left:1241px;top:991px;width:68px;height:24px;border:1px solid #777;box-sizing:border-box"></div><div class="b w" style="left:1193px;top:996px;width:11px;height:11px;border:1px solid #aaa;box-sizing:border-box"></div>
<a class="t5" style="left:462px">正交</a><a class="t5" style="left:513px">对象捕捉</a><a class="t5" style="left:589px">动态输入</a><a class="t5" style="left:673px">交点</a><a class="t5" style="left:723px">垂点</a><a class="t5" style="left:775px">中点</a><a class="t5" style="left:826px">顶点</a><a class="t5" style="left:877px">坐标</a><a class="t5" style="left:918px">不偏移</a><a class="t5 g" style="left:981px;color:#777">X=</a><a class="t5" style="left:1032px;color:#666">0</a><a class="t5" style="left:1059px;color:#777">mm</a><a class="t5" style="left:1086px;color:#777">Y=</a><a class="t5" style="left:1136px;color:#666">0</a><a class="t5" style="left:1164px;color:#777">mm</a><a class="t5" style="left:1213px">旋转</a><a class="t5" style="left:1259px;color:#666">0.000</a><a class="t5" style="left:1313px;color:#666">°</a>

<!-- STATUS -->
<div class="b" style="left:432px;top:1020px;width:1416px;height:20px;background:linear-gradient(#fff,#f0f0f0)"></div>
<div class="b btn" style="left:0;top:1020px;width:147px;height:20px"></div><div class="b btn" style="left:150px;top:1020px;width:77px;height:20px"></div><div class="b btn" style="left:230px;top:1020px;width:97px;height:20px"></div><div class="b btn" style="left:330px;top:1020px;width:47px;height:20px"></div><div class="b btn" style="left:380px;top:1020px;width:50px;height:20px"></div>
<a class="m" style="left:2px;top:1023px">X=82904 Y=59468</a><a class="m" style="left:152px;top:1023px">层高:6.6m</a><a class="m" style="left:232px;top:1023px">底标高:-6.65m</a><a class="m" style="left:332px;top:1023px">1(2)</a>
<div class="b btn" style="left:1850px;top:1020px;width:70px;height:20px"></div><a class="m" style="left:1852px;top:1023px">237.7 FPS</a>
<div class="b" style="left:0;top:1040px;width:1920px;height:8px;background:#000"></div>
<div class="b" style="left:441px;top:1040px;width:49px;height:8px;background:#1a1a1a"></div><div class="b" style="left:638px;top:1040px;width:48px;height:8px;background:#333"></div>
<div class="b" style="left:1843px;top:1044px;width:32px;height:4px;overflow:hidden"><span style="position:absolute;top:0;left:0;color:#ddd;font-size:12px;line-height:12px">17:48</span></div>

<!-- PROPERTY PANEL -->
<div class="b blue" style="left:1581px;top:84px;width:339px;height:15px">属性编辑器</div>
<svg class="l" style="left:1885px;top:85px" width="35" height="14"><path d="M3 1h5v6h2v1H6v4H5V8H1V7h2z" fill="#fff"/><path d="M25 3l7 7M32 3l-7 7" stroke="#fff"/></svg>
<div class="b w bd" style="left:1581px;top:100px;width:338px;height:495px"></div>
<div class="b" style="left:1583px;top:101px;width:20px;height:23px;background:#f0f0f0;border-right:1px solid #c4c4c4"></div>
<div class="b" style="left:1604px;top:101px;width:120px;height:23px;background:linear-gradient(#fff,#eee);text-align:center;line-height:23px">属性名称</div>
<div class="b" style="left:1725px;top:101px;width:190px;height:23px;background:linear-gradient(#fadda8,#f0b860);text-align:center;line-height:23px;color:#660066">属性值</div>
<table class="pt m" style="left:1583px;top:124px;width:332px"><col style="width:20px"><col style="width:121px"><col style="width:191px">
<tr><td>1</td><td class="bl">名称</td><td>KZ2(12/13栋）</td></tr>
<tr><td>2</td><td class="bl">类别</td><td>框架柱</td></tr>
<tr><td>3</td><td class="bl">截面编辑</td><td>是</td></tr>
<tr><td>4</td><td>截面形状</td><td>异形</td></tr>
<tr><td>5</td><td class="gy">截面宽(B边)(mm)</td><td class="gy">800</td></tr>
<tr><td>6</td><td class="gy">截面高(H边)(mm)</td><td class="gy">800</td></tr>
<tr><td>7</td><td class="gy">全部纵筋</td><td class="gy">12Φ18+8Φ16</td></tr>
<tr><td>8</td><td class="bl">其它箍筋</td><td></td></tr>
<tr><td>9</td><td>备注</td><td></td></tr>
<tr><td>10</td><td class="gy">芯柱</td><td></td></tr>
<tr><td>15</td><td class="gy">其它属性</td><td></td></tr>
<tr class="ch"><td>16</td><td>汇总信息</td><td>(柱)</td></tr>
<tr class="ch"><td>17</td><td>保护层厚度(mm)</td><td>(20)</td></tr>
<tr class="ch"><td>18</td><td>上加密范围(mm)</td><td></td></tr>
<tr class="ch"><td>19</td><td>下加密范围(mm)</td><td></td></tr>
<tr class="ch"><td>20</td><td>插筋构造</td><td>设置插筋</td></tr>
<tr class="ch"><td>21</td><td>插筋信息</td><td></td></tr>
<tr class="ch"><td>22</td><td>计算设置</td><td>按默认计算设置计算</td></tr>
<tr class="ch"><td>23</td><td>节点设置</td><td>按默认节点设置计算</td></tr>
<tr class="ch"><td>24</td><td>搭接设置</td><td>按默认搭接设置计算</td></tr>
<tr class="ch"><td>25</td><td>顶标高(m)</td><td>层顶标高-1.25(-1.3)</td></tr>
<tr class="ch"><td>26</td><td>底标高(m)</td><td>层底标高(-6.65)</td></tr>
<tr><td style="background:#fad29a;color:#660066">27</td><td style="background:#0078d7;color:#013">锚固搭接</td><td style="background:#d6e8f8"></td></tr>
<tr><td>42</td><td class="gy">显示样式</td><td></td></tr>
</table>
<svg class="l" style="left:1600px;top:295px" width="40" height="290"><path d="M13 34V237.500" stroke="#b0b0b0" fill="none"/><path d="M13 47.500h16M13 66.500h16M13 85.500h16M13 104.500h16M13 123.500h16M13 142.500h16M13 161.500h16M13 180.500h16M13 199.500h16M13 218.500h16M13 237.500h16" stroke="#b0b0b0" fill="none"/><g fill="#fff" stroke="#999"><path d="M6.500 3.500h11v11h-11zM6.500 22.500h11v11h-11zM6.500 251.500h11v11h-11zM6.500 270.500h11v11h-11z"/></g><path d="M12 6v6M9 9h6M9 28h6M12 254v6M9 257h6M12 273v6M9 276h6" stroke="#111"/></svg>

<div class="b" style="left:1583px;top:601px;width:46px;height:18px;background:#ececec;border:1px solid #ccc;box-sizing:border-box;font-size:12px;line-height:18px;padding-left:6px">截面</div>
<div class="b" style="left:1629px;top:598px;width:51px;height:21px;background:#f8f8f8;border:1px solid #ccc;border-bottom:0;box-sizing:border-box;line-height:18px;padding-left:6px">配筋</div>
<div class="b" style="left:1581px;top:618px;width:337px;height:376px;border:1px solid #ccc;box-sizing:border-box"></div>
<div class="b tb" style="left:1586px;top:623px;width:328px;height:26px"></div>
<div class="b tb" style="left:1586px;top:651px;width:196px;height:26px"></div>
<a style="left:1598px;top:628px">布角筋</a><a style="left:1644px;top:628px">布边筋</a><a style="left:1690px;top:628px">特殊布筋</a><a style="left:1748px;top:628px">对齐钢筋</a><a style="left:1806px;top:628px">画箍筋</a><a style="left:1902px;top:623px;font-weight:bold;font-size:10px">»</a>
<a style="left:1597px;top:656px;color:#999">钢筋信息</a>
<div class="b" style="left:1647px;top:652px;width:133px;height:23px;background:#f4f4f4;border:1px solid #888;box-sizing:border-box"></div>

<svg class="l" style="left:1580px;top:580px" width="340" height="468" viewBox="0 0 1020 1404" font-family="Liberation Sans">
<rect x="20" y="300" width="981" height="930" fill="#000" stroke="#ff0000" stroke-width="6"/>
<path d="M97 500H840M97 580H840M97 660H840M97 740H840M97 820H840M97 900H840M97 980H840M97 1060H840M97 1140H840M145 447V1190M226 447V1190M307 447V1190M385 447V1190M465 447V1190M547 447V1190M626 447V1190M707 447V1190M787 447V1190" stroke="#777" stroke-width="3" stroke-dasharray="27 12" fill="none"/>
<g stroke="#00ff00" stroke-width="3" fill="none"><path d="M385 468H547M385 450V497M547 450V497M370 482L400 452M532 482L562 452M385 1170H547M385 1140V1190M547 1140V1190M370 1190L400 1155M532 1190L562 1155M355 497V738M338 497H385M577 497V738M547 497H600M338 487L370 520M562 487L595 520M338 738L370 708M562 738L595 708M145 710H385M547 710H787M145 690V738M385 690V738M547 690V738M787 690V738M130 725L160 695M370 725L400 695M532 725L562 695M772 725L802 695M115 738V900M95 738H145M95 900H145M98 722L130 755M98 885L130 918M818 738V900M787 738H838M787 900H838M802 722L835 755M802 885L835 918M145 930H385M547 930H787M145 900V950M385 900V950M547 900V950M787 900V950M130 950L160 915M370 950L400 915M532 950L562 915M772 950L802 915M355 900V1140M338 900H385M577 900V1140M547 900H600M338 1125L370 1158M562 1125L595 1158M338 885L370 918M562 885L595 918"/></g>
<path d="M385 497H547V738H787V900H547V1140H385V900H145V738H385Z" fill="none" stroke="#fff" stroke-width="5"/>
<path d="M547 497L630 415" stroke="#fff" stroke-width="2"/>
<g stroke="#ff0000" stroke-width="9" fill="none"><rect x="165" y="760" width="600" height="120"/><rect x="407" y="520" width="118" height="598"/><path d="M407 640H525M407 655L465 710L525 655M407 1000H525M407 985L465 928L525 985M288 760V880M300 765L357 820L300 875M645 760V880M630 765L572 820L630 875M410 525L462 590M425 525L475 578M170 875L222 810M185 875L237 825"/></g>
<g fill="none" stroke="#ffe000" stroke-width="3"><circle cx="175" cy="769" r="6"/><circle cx="755" cy="769" r="6"/><circle cx="175" cy="868" r="6"/><circle cx="755" cy="868" r="6"/><circle cx="415" cy="529" r="6"/><circle cx="515" cy="529" r="6"/><circle cx="415" cy="1109" r="6"/><circle cx="515" cy="1109" r="6"/><circle cx="416" cy="769" r="6"/><circle cx="515" cy="769" r="6"/><circle cx="416" cy="868" r="6"/><circle cx="515" cy="868" r="6"/></g>
<g fill="none" stroke="#ff30ff" stroke-width="3"><circle cx="294" cy="769" r="6"/><circle cx="635" cy="769" r="6"/><circle cx="294" cy="870" r="6"/><circle cx="635" cy="870" r="6"/><circle cx="415" cy="648" r="6"/><circle cx="515" cy="648" r="6"/><circle cx="415" cy="990" r="6"/><circle cx="515" cy="990" r="6"/></g>
<g fill="#f0f0f0" font-size="33" text-anchor="middle"><text x="465" y="446">200</text><text x="321" y="629">300</text><text x="264" y="686">300</text><text x="609" y="629">300</text><text x="666" y="686">300</text><text x="80" y="831">200</text><text x="848" y="831">200</text><text x="264" y="974">300</text><text x="321" y="1031">300</text><text x="666" y="974">300</text><text x="609" y="1031">300</text><text x="465" y="1214">200</text></g>
<text x="473" y="840" fill="#444" font-size="33" text-anchor="middle">0</text>
<text x="632" y="393" fill="#e8e8e8" font-size="32" font-family="WenQuanYi Zen Hei,Noto Sans CJK SC,sans-serif">全部纵筋</text><text x="632" y="426" fill="#e8e8e8" font-size="32" font-family="WenQuanYi Zen Hei,Noto Sans CJK SC,sans-serif">箍筋</text>
<text x="775" y="393" fill="#00e000" font-size="33" textLength="178" lengthAdjust="spacingAndGlyphs">12C18+8C16</text><text x="775" y="426" fill="#00e000" font-size="33" textLength="178" lengthAdjust="spacingAndGlyphs">C8@100/200</text>
</svg>
<div class="b btn" style="left:1581px;top:998px;width:148px;height:19px"></div><div class="b btn" style="left:1731px;top:998px;width:189px;height:19px"></div>
<a class="m" style="left:1589px;top:1001px">(X: -103 Y: 491)</a>

<!-- ICON LAYER -->
<svg class="l" style="left:0;top:0;pointer-events:none" width="1920" height="1048">
<use href="#new" x="796" y="30"/>
<circle cx="882" cy="38" r="7.500" fill="#1aa0ee"/><circle cx="879" cy="36" r="1.500" fill="#fff"/><circle cx="885" cy="36" r="1.500" fill="#fff"/>
<use href="#dn" x="861" y="37"/>
<rect x="1651" y="30" width="16" height="16" rx="3" fill="#3a90d8"/><circle cx="1659" cy="35" r="3" fill="#fff"/><path d="M1654 43c0-3 10-3 10 0z" fill="#fff"/><use href="#dn" x="1755" y="37"/>
<path d="M1825 45h13l-2-3v-5c0-6-9-6-9 0v5z" fill="#1a78d8"/>
<path d="M1846.500 30.500h15v12h-8l-3 3v-3h-4z" fill="#fff" stroke="#2a80d0"/><path d="M1850 36.500h8" stroke="#2a80d0" stroke-dasharray="2 1"/>

<use href="#new" x="6" y="60"/><use href="#open" x="28" y="60"/><use href="#dn" x="50" y="66"/><use href="#save" x="63" y="60"/><path d="M85.500 56v21" stroke="#bbb"/><use href="#undo" x="92" y="60"/><use href="#dn" x="114" y="66"/><use href="#redo" x="126" y="60"/><use href="#dn" x="149" y="66"/>
<use href="#def" x="166" y="60"/><use href="#cloud" x="292" y="60"/><use href="#plate" x="355" y="60"/><use href="#find" x="429" y="60"/><use href="#gls" x="505" y="60"/><use href="#bsel" x="592" y="60"/><use href="#r3d" x="667" y="60"/><use href="#lock" x="743" y="60"/><use href="#ulk" x="794" y="60"/><use href="#brush" x="846" y="60"/>
<use href="#sq" x="985" y="60"/><use href="#dn" x="1033" y="66"/><use href="#cube" x="1047" y="60"/><use href="#dn" x="1097" y="66"/><use href="#orb" x="1110" y="60"/><use href="#loc" x="1186" y="60"/><path d="M1260.500 56v21" stroke="#bbb"/><use href="#full" x="1266" y="60"/><use href="#zm" x="1318" y="60"/><use href="#dn" x="1367" y="66"/><use href="#hand" x="1382" y="60"/><use href="#dn" x="1430" y="66"/><use href="#rotz" x="1443" y="60"/><use href="#dn" x="1514" y="66"/><path d="M1527.500 56v21" stroke="#bbb"/><use href="#flr" x="1535" y="60"/><use href="#wire" x="1608" y="60"/>

<path d="M436.500 88v18" stroke="#888" stroke-dasharray="2 2"/>
<use href="#brush" x="443" y="89"/><path d="M493.500 90v15M601.500 90v15M710.500 90v15M818.500 90v15M976.500 90v15M1143.500 90v15" stroke="#bbb"/><use href="#copy" x="500" y="89"/><use href="#mir" x="551" y="89"/><use href="#mov" x="608" y="89"/><use href="#rot" x="659" y="89"/><use href="#ext" x="716" y="89"/><use href="#trm" x="766" y="89"/><use href="#brk" x="823" y="89"/><use href="#brk" x="875" y="89"/><use href="#spl" x="927" y="89"/><use href="#alg" x="983" y="89"/><use href="#dn" x="1028" y="95"/><use href="#off" x="1042" y="89"/><use href="#str" x="1093" y="89"/><use href="#ptd" x="1150" y="89"/>

<use href="#dn" x="488" y="122"/><use href="#dn" x="560" y="122"/><use href="#dn" x="632" y="122"/><use href="#dn" x="704" y="122"/><path d="M718.500 115v18" stroke="#bbb"/><use href="#atr" x="725" y="116"/><use href="#edt" x="776" y="116"/><use href="#lst" x="851" y="116"/><use href="#pck" x="927" y="116"/>
<path d="M1076.500 114v19" stroke="#888" stroke-dasharray="2 2"/><use href="#two" x="1083" y="116"/><use href="#par" x="1134" y="116"/><use href="#ang" x="1185" y="116"/><use href="#dn" x="1234" y="122"/><use href="#arc" x="1247" y="116"/><use href="#dn" x="1321" y="122"/><use href="#brush" x="1334" y="116"/><use href="#dim" x="1410" y="116"/><use href="#dn" x="1483" y="122"/>

<path d="M436.500 143v19M1268.500 143v19" stroke="#888" stroke-dasharray="2 2"/><use href="#cur" x="445" y="144"/><use href="#dn" x="493" y="150"/><path d="M507.500 144v17M613.500 144v17M703.500 144v17" stroke="#bbb"/><use href="#pnt" x="514" y="144"/><use href="#rp" x="552" y="144"/><use href="#sma" x="621" y="144"/><use href="#dn" x="690" y="150"/><use href="#org" x="709" y="144"/><use href="#tbl" x="785" y="144"/><use href="#adj" x="860" y="144"/><use href="#wl2" x="947" y="144"/><use href="#dn" x="1056" y="150"/><use href="#aut" x="1069" y="144"/><use href="#chk" x="1180" y="144"/><use href="#dn" x="1254" y="150"/>

<path d="M436.500 992v20M647.500 992v20M911.500 992v20" stroke="#888" stroke-dasharray="2 2"/><use href="#ort" x="442" y="994"/><use href="#snp" x="494" y="994"/><use href="#dyn" x="568" y="994"/><use href="#crs" x="653" y="994"/><use href="#prp" x="705" y="994"/><use href="#mdp" x="755" y="994"/><use href="#apx" x="806" y="994"/><use href="#crd" x="857" y="994"/><use href="#dn" x="964" y="1001"/><path d="M978.500 993v19M1189.500 993v19" stroke="#aaa"/>
<path d="M1047 998l3-3 3 3zM1047 1006l3 3 3-3zM1151 998l3-3 3 3zM1151 1006l3 3 3-3zM1298 998l3-3 3 3zM1298 1006l3 3 3-3z" fill="#555"/>

<g transform="translate(1289,1015) rotate(-6)"><rect width="26" height="23" rx="3" fill="#f0501c"/><text x="13" y="20" fill="#fff" font-size="22" font-weight="bold" text-anchor="middle" font-family="Liberation Sans">S</text></g>
<rect x="1316.500" y="1017.500" width="24" height="21" fill="#fff" stroke="#bcd"/><text x="1329" y="1033" fill="#1a78c8" font-size="14" font-weight="bold" text-anchor="middle" font-family="Noto Sans CJK SC">中</text>

<!-- header pins -->
<use href="#pin" x="398" y="85"/><use href="#xx" x="414" y="87"/><use href="#pin" x="395" y="533"/><path d="M393.500 533v13" stroke="#555"/><use href="#xx" x="415" y="535"/><use href="#pin" x="396" y="894"/><use href="#xx" x="415" y="896"/>
<!-- left + - -->
<path d="M11 152v8M7 156h8" stroke="#111" stroke-width="3"/><path d="M18 160v8M14 164h8" stroke="#0a7a8a" stroke-width="3"/><path d="M25 154h8" stroke="#111" stroke-width="3"/><path d="M31 164h8" stroke="#0a7a8a" stroke-width="3"/>
<!-- list toolbar -->
<path d="M174 108h8M178 104v8" stroke="#d8b030" stroke-width="3"/><rect x="180.500" y="112.500" width="9" height="7" fill="#bde" stroke="#26a"/><use href="#dn" x="221" y="112"/><path d="M236 107l12 12M248 107l-12 12" stroke="#333" stroke-width="2"/><rect x="257.500" y="105.500" width="8" height="10" fill="#bde" stroke="#48c"/><rect x="262.500" y="109.500" width="8" height="9" fill="#def" stroke="#48c"/>
<circle cx="415" cy="139" r="5" fill="none" stroke="#3a8ae0" stroke-width="2.500"/><path d="M411 143l-3 4" stroke="#3a8ae0" stroke-width="2.500"/>
<!-- tree lines -->
<path d="M15.500 190V286M15.500 318V366M15.500 398V478M15.500 510V526M15.500 558V660M34.500 190V278M34.500 318V374M34.500 398V470M34.500 510V534M34.500 558V661M34.500 734V950M202.500 155V520" stroke="#888" stroke-dasharray="1 1" fill="none"/>
<path d="M35 198h10M35 214h10M35 230h10M35 246h10M35 262h10M35 278h10M35 326h10M35 342h10M35 358h10M35 374h10M35 406h10M35 422h10M35 438h10M35 454h10M35 470h10M35 518h10M35 534h10M35 566h10M35 582h10M35 598h10M35 614h10M35 630h10M35 646h10M35 662h10M35 742h10M35 758h10M35 774h10M35 790h10M35 806h10M35 822h10M35 838h10M35 854h10M35 870h10M35 886h10M35 902h10M35 918h10M35 934h10M35 950h10" stroke="#888" stroke-dasharray="1 1"/>
<!-- tree folders -->
<g fill="none" stroke="#333" stroke-width="1.500"><path d="M10 180l4 4 4-4M10 308l4 4 4-4M10 388l4 4 4-4M10 500l4 4 4-4M10 548l4 4 4-4M10 724l4 4 4-4"/></g>
<g fill="none" stroke="#bbb" stroke-width="2"><path d="M12 290l4 4-4 4M12 482l4 4-4 4M12 674l4 4-4 4M12 690l4 4-4 4M12 706l4 4-4 4"/></g>
<use href="#fo" x="26" y="174"/><use href="#fc" x="26" y="286"/><use href="#fo" x="26" y="302"/><use href="#fo" x="26" y="382"/><use href="#fc" x="26" y="478"/><use href="#fo" x="26" y="494"/><use href="#fo" x="26" y="542"/><use href="#fc" x="26" y="670"/><use href="#fc" x="26" y="686"/><use href="#fc" x="26" y="702"/><use href="#fo" x="26" y="718"/>
<rect x="94.500" y="719.500" width="14" height="13" fill="#cde8ff" stroke="#1a70d0"/><path d="M99.500 720v12M104 720v12" stroke="#1a70d0"/>
<use href="#axi" x="45" y="190"/><use href="#raf" x="45" y="206"/><use href="#col" x="45" y="222"/><use href="#wal" x="45" y="238"/><use href="#bem" x="45" y="254"/><use href="#slb" x="45" y="270"/>
<use href="#col" x="45" y="318"/><use href="#col" x="45" y="334"/><use href="#col" x="45" y="350"/><use href="#gzz" x="45" y="366"/>
<use href="#wal" x="45" y="398"/><use href="#dor" x="45" y="414"/><use href="#mas" x="45" y="430"/><use href="#hid" x="45" y="446"/><use href="#mrf" x="45" y="462"/>
<use href="#bem" x="45" y="510"/><use href="#slb" x="45" y="526"/><use href="#slb" x="45" y="558"/><use href="#spi" x="45" y="574"/><use href="#cap" x="45" y="590"/><use href="#slb" x="45" y="606"/><use href="#rb" x="45" y="622"/><use href="#rb" x="45" y="638"/><use href="#bnd" x="45" y="654"/>
<use href="#cad" x="45" y="734"/><use href="#ai" x="45" y="750"/><use href="#axi" x="45" y="766"/><use href="#mg" x="45" y="766"/><use href="#cad" x="45" y="782"/>
<use href="#col" x="45" y="798"/><use href="#mg" x="45" y="798"/><use href="#wal" x="45" y="814"/><use href="#mg" x="45" y="814"/><use href="#rb" x="45" y="830"/><use href="#mg" x="45" y="830"/><use href="#hid" x="45" y="846"/><use href="#mg" x="45" y="846"/><use href="#slb" x="45" y="862"/><use href="#mg" x="45" y="862"/><use href="#rb" x="45" y="878"/><use href="#mg" x="45" y="878"/><use href="#rb" x="45" y="894"/><use href="#mg" x="45" y="894"/><use href="#gzz" x="45" y="910"/><use href="#mg" x="45" y="910"/><use href="#cap" x="45" y="926"/><use href="#mg" x="45" y="926"/><use href="#gzz" x="45" y="942"/><use href="#mg" x="45" y="942"/>
<!-- component list icons -->
<path d="M203 163h10M203 179h10M203 195h10M203 211h10M203 227h10M203 243h10M203 259h10M203 275h10M203 291h10M203 307h10M203 323h10M203 339h10M203 355h10M203 371h10M203 387h10M203 403h10M203 419h10M203 435h10M203 451h10M203 467h10M203 483h10M203 499h10M203 515h10" stroke="#888" stroke-dasharray="1 1"/>
<use href="#gz" x="214" y="157"/><use href="#gz" x="214" y="173"/><use href="#gz" x="214" y="189"/><use href="#gz" x="214" y="205"/><use href="#gz" x="214" y="221"/><use href="#gz" x="214" y="237"/><use href="#gz" x="214" y="253"/><use href="#gz" x="214" y="269"/><use href="#gz" x="214" y="285"/><use href="#gz" x="214" y="301"/><use href="#gz" x="214" y="317"/><use href="#gz" x="214" y="333"/><use href="#gz" x="214" y="349"/><use href="#gz" x="214" y="365"/><use href="#gz" x="214" y="381"/><use href="#gz" x="214" y="397"/><use href="#gz" x="214" y="413"/><use href="#gz" x="214" y="429"/><use href="#gz" x="214" y="445"/><use href="#gz" x="214" y="461"/><use href="#gz" x="214" y="477"/><use href="#gz" x="214" y="493"/><use href="#gz" x="214" y="509"/>
<path d="M413 165l4-4 4 4M413 513l4 4 4-4M408 607l4-4 4 4M408 853l4 4 4-4M187 870l-4 4 4 4M394 870l4 4-4 4" fill="none" stroke="#555" stroke-width="2"/>
<use href="#dn" x="235" y="582"/>
<!-- cad layers -->
<path d="M181 913l3 3-3 3M181 927l3 3-3 3" fill="none" stroke="#bbb" stroke-width="2"/><rect x="196.500" y="912.500" width="12" height="11" fill="#fff" stroke="#555"/><rect x="199" y="915" width="7" height="6" fill="#333"/><rect x="196.500" y="926.500" width="12" height="11" fill="#fff" stroke="#555"/><path d="M199 932l3 3 5-6" stroke="#333" fill="none" stroke-width="1.300"/>
<use href="#dn" x="1770" y="661"/><path d="M1590.500 628v14M1590.500 656v14" stroke="#888" stroke-dasharray="2 2"/>
<!-- overlays on the right edge -->
<path d="M1920 297a18 22 0 0 0 0 44z" fill="#c8f0f0"/>
<rect x="1910" y="387" width="10" height="58" rx="2" fill="#3a4a58"/><path d="M1915 392v49" stroke="#2a80c0" stroke-width="2" stroke-dasharray="2 1"/>
<circle cx="1926" cy="577" r="24" fill="#3fc060" stroke="#bde" stroke-width="2"/><text x="1905" y="584" fill="#fff" font-size="13" font-weight="bold" font-family="Liberation Sans">61</text>
<path d="M1743 630L1816 532L1811 528L1826 524L1823 541L1819 536Z" fill="#e83038"/>
</svg>
</body></html>
